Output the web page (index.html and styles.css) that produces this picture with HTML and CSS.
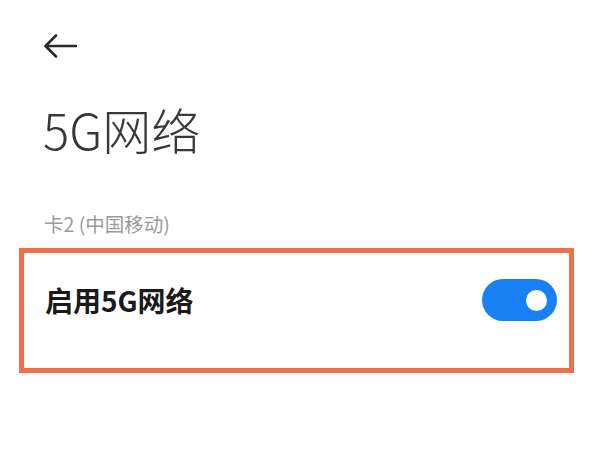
FILE: index.html
```html
<!DOCTYPE html>
<html lang="zh-CN">
<head>
    <meta charset="UTF-8">
    <title>5G网络</title>
    <link rel="stylesheet" href="styles.css">
</head>
<body>
    <div class="header">
        <svg class="back" width="34" height="26" viewBox="0 0 34 26">
            <path d="M33 13 H3 M13 2.5 L2.5 13 L13 23.5" fill="none" stroke="#2a2a2a" stroke-width="2.6" stroke-linecap="round" stroke-linejoin="round"/>
        </svg>
        <h1 class="title">5G网络</h1>
    </div>

    <p class="section">卡2 (中国移动)</p>

    <div class="setting-box">
        <div class="row">
            <span class="label">启用5G网络</span>
            <div class="switch on"><div class="knob"></div></div>
        </div>
    </div>
</body>
</html>
```

FILE: styles.css
```css
body {
    margin: 0;
    background-color: #ffffff;
    font-family: "Noto Sans CJK SC", "Noto Sans", sans-serif;
}

.header {
    padding-left: 43px;
}

.back {
    display: block;
    margin-top: 33px;
}

.title {
    margin: 42px 0 0 0;
    font-size: 49px;
    line-height: 56px;
    font-weight: 300;
    color: #383838;
}

.section {
    margin: 55px 0 0 44px;
    font-size: 19.5px;
    line-height: 24px;
    color: #9a9a9a;
}

.setting-box {
    margin: 12px 26px 0 19px;
    height: 125px;
    border: 5px solid #ee7049;
    padding: 26px 12px 0 21px;
    box-sizing: border-box;
}

.row {
    display: flex;
    align-items: center;
    justify-content: space-between;
    height: 42px;
}

.label {
    font-size: 28px;
    font-weight: bold;
    color: #1a1a1a;
}

.switch {
    width: 75px;
    height: 42px;
    border-radius: 21px;
    background-color: #1a80f5;
    display: flex;
    align-items: center;
    justify-content: flex-end;
    padding-right: 10px;
    box-sizing: border-box;
}

.knob {
    width: 21px;
    height: 21px;
    border-radius: 50%;
    background-color: #ffffff;
}
```
